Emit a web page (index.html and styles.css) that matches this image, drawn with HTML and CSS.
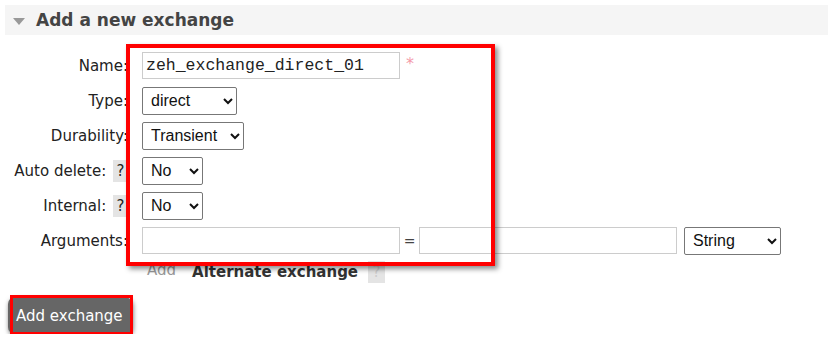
FILE: index.html
```html
<!DOCTYPE html>
<html lang="en">
<head>
  <meta charset="UTF-8" />
  <title>Add a new exchange</title>
  <link rel="stylesheet" href="styles.css">
</head>
<body>
  <div class="section">
    <h2 class="section-head"><span class="arrow"></span>Add a new exchange</h2>

    <form class="exchange-form">
      <div class="row">
        <label class="lbl">Name:</label>
        <input type="text" class="txt name" value="zeh_exchange_direct_01">
        <span class="req">*</span>
      </div>
      <div class="row">
        <label class="lbl">Type:</label>
        <select class="sel w-type"><option>direct</option></select>
      </div>
      <div class="row">
        <label class="lbl">Durability:</label>
        <select class="sel w-dur"><option>Transient</option></select>
      </div>
      <div class="row">
        <label class="lbl">Auto delete: <span class="help">?</span></label>
        <select class="sel w-no"><option>No</option></select>
      </div>
      <div class="row">
        <label class="lbl">Internal: <span class="help">?</span></label>
        <select class="sel w-no"><option>No</option></select>
      </div>
      <div class="row">
        <label class="lbl">Arguments:</label>
        <input type="text" class="txt arg">
        <span class="eq">=</span>
        <input type="text" class="txt arg">
        <select class="sel w-str"><option>String</option></select>
      </div>
      <div class="row extra">
        <span class="add-link">Add</span>
        <span class="alt">Alternate exchange</span>
        <span class="help faded">?</span>
      </div>

      <div class="mark mark-form"></div>
    </form>

    <div class="btn-wrap">
      <button type="button" class="btn">Add exchange</button>
      <div class="mark mark-btn"></div>
    </div>
  </div>
</body>
</html>
```

FILE: styles.css
```css
body {
  margin: 0;
  background: #fff;
  font-family: "DejaVu Sans", Verdana, sans-serif;
  color: #222;
}

.section {
  position: relative;
  padding: 5px 3px 0 5px;
}

.section-head {
  margin: 0;
  height: 30px;
  display: flex;
  align-items: center;
  background: #f5f5f5;
  font-size: 17px;
  font-weight: bold;
  color: #444;
}

.arrow {
  width: 0;
  height: 0;
  margin: 2px 11px 0 8px;
  border-left: 6.5px solid transparent;
  border-right: 6.5px solid transparent;
  border-top: 7px solid #999;
}

.exchange-form {
  position: relative;
  padding-top: 13px;
}

.row {
  display: flex;
  align-items: center;
  height: 35px;
}

.lbl {
  width: 123px;
  padding-right: 14px;
  text-align: right;
  font-size: 15px;
  white-space: nowrap;
}

.help {
  display: inline-block;
  width: 15px;
  height: 22px;
  line-height: 22px;
  text-align: center;
  background: #e4e4e4;
  font-size: 15px;
  color: #222;
  vertical-align: middle;
  margin-left: 2px;
}

.txt {
  box-sizing: border-box;
  height: 27px;
  border: 1px solid #ccc;
  padding: 0 3px;
  font-family: "Liberation Mono", "Courier New", monospace;
  font-size: 16.5px;
  color: #222;
}

.name {
  width: 258px;
}

.arg {
  width: 258px;
}

.req {
  margin-left: 6px;
  color: #f49aa9;
  font-size: 16px;
  align-self: flex-start;
  margin-top: 6px;
}

.eq {
  width: 19px;
  text-align: center;
  font-size: 14px;
  color: #444;
}

.sel {
  box-sizing: border-box;
  height: 28px;
  border: 1px solid #777;
  border-radius: 2px;
  background: #fff;
  font-family: "Liberation Sans", Arial, sans-serif;
  font-size: 16px;
  color: #111;
  padding-left: 4px;
}

.w-type { width: 95px; }
.w-dur { width: 102px; }
.w-no { width: 61px; }
.w-str { width: 97px; margin-left: 7px; }

.extra {
  height: 28px;
  padding-left: 142px;
}

.add-link {
  margin-left: 0;
  font-size: 15px;
  color: #999;
  margin-top: -4px;
}

.alt {
  margin-left: 16px;
  font-size: 15px;
  font-weight: bold;
  color: #333;
}

.faded {
  margin-left: 10px;
  color: #ccc;
  width: 17px;
}

.btn-wrap {
  position: relative;
  margin-top: 11px;
  padding-left: 3px;
}

.btn {
  height: 37px;
  padding: 0 9px 0 8px;
  border: none;
  border-radius: 7px;
  background: #666;
  color: #fff;
  font-family: "DejaVu Sans", Verdana, sans-serif;
  font-size: 15px;
  box-shadow: 1px 2px 5px rgba(0, 0, 0, 0.6);
}

/* red annotation frames drawn over the form */
.mark {
  position: absolute;
  border: 4px solid #f00;
  box-shadow: 3px 3px 5px rgba(0, 0, 0, 0.45);
  pointer-events: none;
}

.mark-form {
  left: 121px;
  top: 9px;
  width: 361px;
  height: 214px;
}

.mark-btn {
  left: 5px;
  top: -2px;
  width: 117px;
  height: 34px;
  border-width: 3px;
  box-shadow: none;
}
```
